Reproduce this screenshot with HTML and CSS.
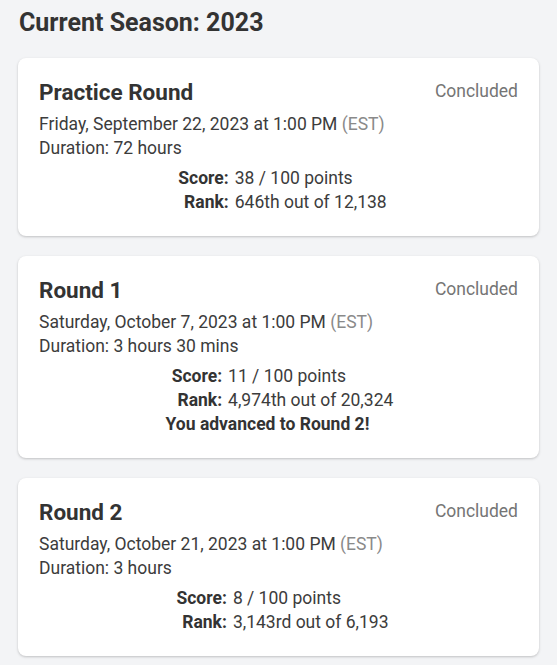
FILE: index.html
```html
<!DOCTYPE html>
<html>
<head>
<meta charset="utf-8">
<link rel="stylesheet" href="styles.css">
</head>
<body>
<div class="page">
  <h1 class="season">Current Season: 2023</h1>

  <div class="card">
    <div class="head">
      <h2 class="name">Practice Round</h2>
      <span class="status">Concluded</span>
    </div>
    <div class="info">Friday, September 22, 2023 at 1:00 PM <span class="tz">(EST)</span></div>
    <div class="info">Duration: 72 hours</div>
    <div class="stats">
      <div class="grid">
        <span class="lbl">Score:</span><span class="val">38 / 100 points</span>
        <span class="lbl">Rank:</span><span class="val">646th out of 12,138</span>
      </div>
    </div>
  </div>

  <div class="card">
    <div class="head">
      <h2 class="name">Round 1</h2>
      <span class="status">Concluded</span>
    </div>
    <div class="info">Saturday, October 7, 2023 at 1:00 PM <span class="tz">(EST)</span></div>
    <div class="info">Duration: 3 hours 30 mins</div>
    <div class="stats">
      <div class="grid">
        <span class="lbl">Score:</span><span class="val">11 / 100 points</span>
        <span class="lbl">Rank:</span><span class="val">4,974th out of 20,324</span>
      </div>
      <div class="adv">You advanced to Round 2!</div>
    </div>
  </div>

  <div class="card">
    <div class="head">
      <h2 class="name">Round 2</h2>
      <span class="status">Concluded</span>
    </div>
    <div class="info">Saturday, October 21, 2023 at 1:00 PM <span class="tz">(EST)</span></div>
    <div class="info">Duration: 3 hours</div>
    <div class="stats">
      <div class="grid">
        <span class="lbl">Score:</span><span class="val">8 / 100 points</span>
        <span class="lbl">Rank:</span><span class="val">3,143rd out of 6,193</span>
      </div>
    </div>
  </div>
</div>
</body>
</html>
```
FILE: styles.css
```css
html, body {
  margin: 0;
  padding: 0;
  background: #f3f4f6;
}
body {
  font-family: Roboto, "Liberation Sans", sans-serif;
  color: #3a3a3a;
}
.page {
  padding: 7px 18px 20px 18px;
  display: flex;
  flex-direction: column;
  gap: 20px;
}
.season {
  margin: 0 0 -1px 1px;
  font-size: 25px;
  line-height: 32px;
  font-weight: 700;
  color: #333;
}
.card {
  background: #fff;
  border-radius: 8px;
  box-shadow: 0 1px 3px rgba(0,0,0,0.16), 0 1px 2px rgba(0,0,0,0.06);
  padding: 18px 21px 22px 21px;
}
.head {
  display: flex;
  justify-content: space-between;
  align-items: flex-start;
  margin-bottom: 4px;
}
.name {
  margin: 0;
  font-size: 22.5px;
  line-height: 32px;
  font-weight: 700;
  color: #333;
}
.status {
  font-size: 17.5px;
  line-height: 30px;
  color: #757575;
}
.info {
  font-size: 17.5px;
  line-height: 24px;
  color: #3c3c3c;
}
.tz {
  color: #8a8a8a;
}
.stats {
  margin-top: 6px;
  display: flex;
  flex-direction: column;
  align-items: center;
  font-size: 17.5px;
  line-height: 24px;
}
.grid {
  display: grid;
  grid-template-columns: auto auto;
  column-gap: 6px;
  padding-left: 8px;
}
.lbl {
  font-weight: 700;
  text-align: right;
  color: #333;
}
.val {
  color: #3c3c3c;
}
.adv {
  font-weight: 700;
  color: #333;
  padding-right: 22px;
}
```
